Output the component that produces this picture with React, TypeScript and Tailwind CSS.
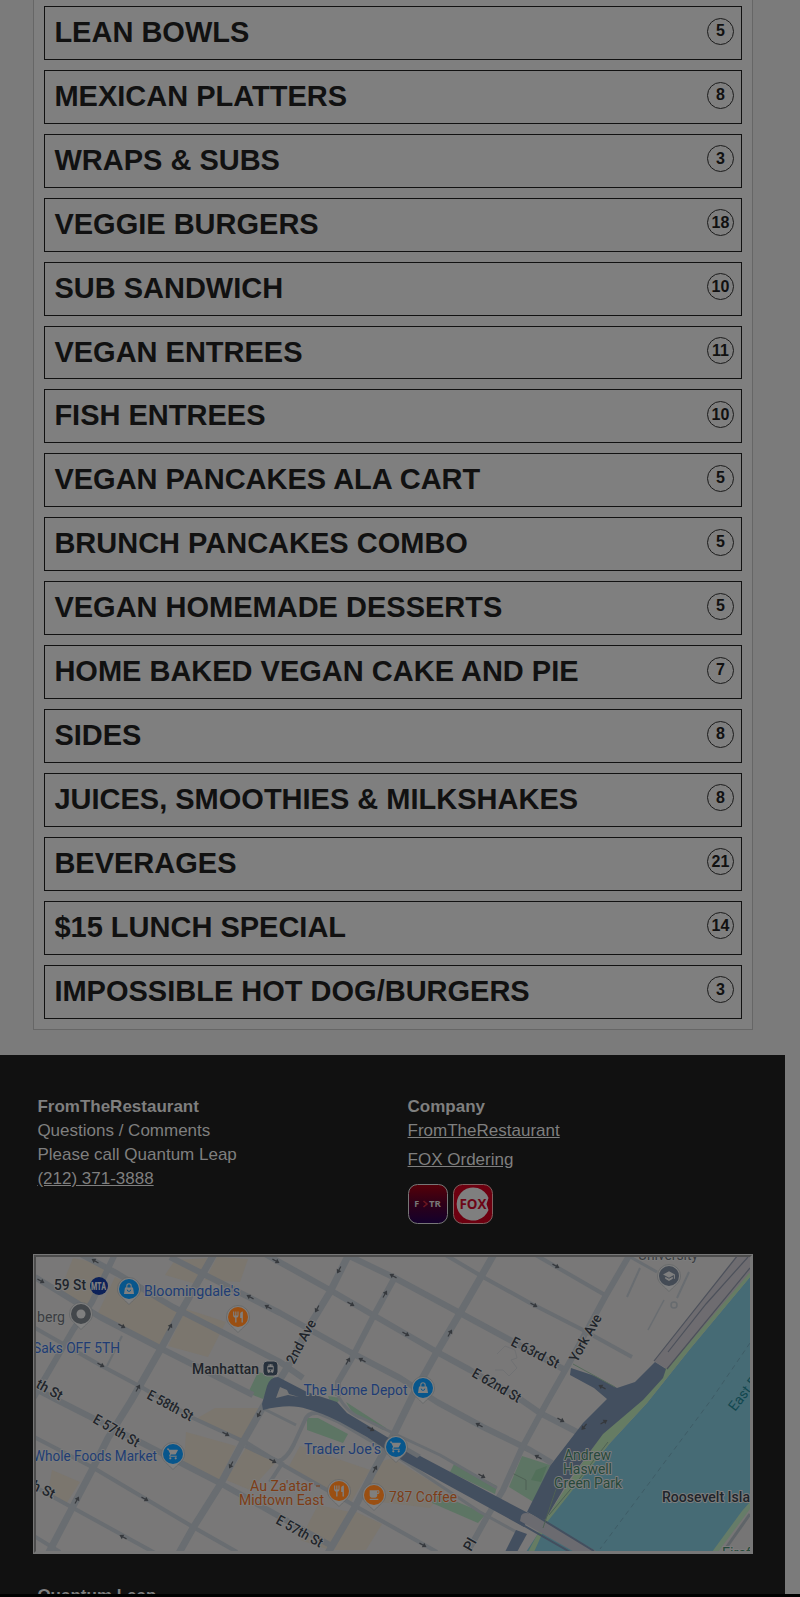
import type { IconType } from "react-icons";
import {
  MdLocalCafe,
  MdRestaurant,
  MdSchool,
  MdShoppingCart,
  MdTram,
} from "react-icons/md";

const categories = [
  { name: "LEAN BOWLS", count: 5 },
  { name: "MEXICAN PLATTERS", count: 8 },
  { name: "WRAPS & SUBS", count: 3 },
  { name: "VEGGIE BURGERS", count: 18 },
  { name: "SUB SANDWICH", count: 10 },
  { name: "VEGAN ENTREES", count: 11 },
  { name: "FISH ENTREES", count: 10 },
  { name: "VEGAN PANCAKES ALA CART", count: 5 },
  { name: "BRUNCH PANCAKES COMBO", count: 5 },
  { name: "VEGAN HOMEMADE DESSERTS", count: 5 },
  { name: "HOME BAKED VEGAN CAKE AND PIE", count: 7 },
  { name: "SIDES", count: 8 },
  { name: "JUICES, SMOOTHIES & MILKSHAKES", count: 8 },
  { name: "BEVERAGES", count: 21 },
  { name: "$15 LUNCH SPECIAL", count: 14 },
  { name: "IMPOSSIBLE HOT DOG/BURGERS", count: 3 },
];

function CategoryRow({ name, count }: { name: string; count: number }) {
  return (
    <li className="flex h-[53.92px] shrink-0 items-start justify-between border border-[#111] pl-[9.4px] pr-[7px]">
      <h2 className="pt-[8px] text-[29px] leading-[34px] font-bold whitespace-nowrap">
        {name}
      </h2>
      <span className="mt-[10.6px] flex size-[27px] items-center justify-center rounded-full border border-[#1c1c1c] text-[16px] leading-none font-bold">
        {count}
      </span>
    </li>
  );
}

const streets = [
  { d: "M170 1257 L280 1313 L350 1352 L400 1378 L437 1402 L483 1427 L530 1450 L552 1463", w: 6 },
  { d: "M77 1252 L118 1274 L173 1307 L280 1362 L303 1378", w: 6 },
  { d: "M35 1277 L100 1317 L160 1348 L253 1395", w: 6 },
  { d: "M35 1328 L100 1365 L143 1388 L193 1418 L247 1443 L283 1465 L357 1507 L437 1552", w: 4 },
  { d: "M30 1386 L57 1400 L140 1442 L220 1483 L330 1545", w: 6 },
  { d: "M34 1437 L92 1467 L193 1527 L237 1552", w: 4 },
  { d: "M30 1484 L55 1498 L155 1553", w: 4 },
  { d: "M34 1536 L60 1552", w: 4 },
  { d: "M265 1254 L330 1290 L373 1315 L437 1352 L470 1370 L520 1399 L540 1413 L577 1432", w: 6 },
  { d: "M345 1254 L393 1277 L460 1313 L510 1340 L567 1371", w: 6 },
  { d: "M444 1254 L483 1277 L530 1303 L583 1330 L632 1357", w: 4 },
  { d: "M534 1254 L605 1295", w: 4 },
  { d: "M625 1254 L657 1272", w: 3 },
  { d: "M30 1404 L45 1378 L73 1330 L92 1302 L115 1254", w: 6 },
  { d: "M214 1254 L183 1308 L163 1345 L131 1401 L108 1438 L92 1470 L70 1512 L48 1554", w: 7 },
  { d: "M349 1254 L330 1292 L310 1325 L287 1368 L263 1407 L243 1442 L220 1485 L193 1528 L179 1553", w: 7 },
  { d: "M395 1277 L373 1317 L352 1358 L338 1382 L338 1396", w: 6 },
  { d: "M347 1425 L318 1413 Q308 1412 305 1420 L294 1444 Q286 1460 278 1461 L266 1456 L245 1446", w: 4 },
  { d: "M283 1462 L270 1482", w: 4 },
  { d: "M262 1408 L296 1425", w: 3 },
  { d: "M494 1254 L482 1275 L460 1313 L437 1352 L413 1395 L395 1432 L373 1472 L355 1507 L328 1553", w: 7 },
  { d: "M630 1254 L605 1297 L567 1367 L547 1402 L522 1448 L503 1490 L487 1517 L468 1551", w: 6 },
  { d: "M122 1336 L107 1366", w: 2 },
  { d: "M640 1268 L627 1297", w: 2 },
  { d: "M689 1272 L677 1298", w: 2 },
  { d: "M664 1300 L648 1330", w: 1.5 },
  { d: "M338 1396 Q348 1414 362 1418 L395 1434 L440 1455 L497 1488", w: 3 },
  { d: "M318 1410 L396 1456 L480 1512 L520 1534", w: 3 },
];

// warm shading of the commercial blocks
const blocks = [
  "M73 1258 L110 1266 L88 1306 L60 1291Z",
  "M115 1277 L181 1309 L160 1346 L97 1315Z",
  "M175 1260 L210 1258 L196 1284 L165 1275Z",
  "M186 1309 L226 1322 L208 1357 L168 1346Z",
  "M217 1257 L248 1259 L240 1282 L205 1280Z",
  "M215 1408 L262 1408 L240 1440 L196 1419Z",
  "M186 1432 L236 1446 L218 1482 L184 1464Z",
  "M247 1446 L276 1462 L250 1490 L226 1480Z",
  "M300 1446 L370 1470 L350 1504 L288 1468Z",
  "M380 1462 L392 1458 L445 1490 L430 1508 L364 1500Z",
  "M352 1510 L382 1524 L366 1550 L334 1550Z",
  "M318 1505 L350 1512 L330 1550 L300 1540Z",
  "M52 1470 L80 1482 L66 1504 L48 1492Z",
];

const parks = [
  "M258 1372 L274 1376 L263 1399 L248 1393Z",
  "M307 1418 L318 1418 L348 1434 L343 1443 L307 1430Z",
  "M454 1464 L497 1486 L495 1494 L450 1472Z",
  "M436 1493 L486 1514 L478 1523 L432 1503Z",
  "M522 1456 L550 1465 L535 1503 L509 1487Z",
  "M346 1402 L386 1428 L383 1430 L352 1412Z",
  "M328 1396 L340 1398 L338 1402 L330 1401Z",
];

const highways = [
  "M262 1404 L267 1386 Q270 1377 278 1377 L307 1392 L337 1402 L347 1413 L387 1437 L422 1457 L530 1514 L524 1527 L400 1459 L367 1437 L340 1422 Q320 1412 307 1409 Q290 1403 263 1410 Z",
  "M655 1362 L666 1369 L663 1378 L643 1400 L603 1434 L569 1480 L545 1520 L527 1512 L550 1466 L583 1423 L607 1399 L594 1388 L570 1375 L571 1368 L595 1376 L617 1388 L635 1382 Z",
  "M516 1530 L527 1534 L517 1552 L505 1552 Z",
];

const arrows = [
  { x: 95, y: 1261, a: 210 },
  { x: 41, y: 1281, a: 28 },
  { x: 122, y: 1326, a: 28 },
  { x: 101, y: 1365, a: 28 },
  { x: 138, y: 1388, a: -60 },
  { x: 170, y: 1327, a: -60 },
  { x: 250, y: 1297, a: 208 },
  { x: 268, y: 1307, a: 208 },
  { x: 276, y: 1261, a: 28 },
  { x: 339, y: 1270, a: 118 },
  { x: 317, y: 1309, a: 118 },
  { x: 351, y: 1304, a: 28 },
  { x: 385, y: 1294, a: -60 },
  { x: 393, y: 1276, a: 208 },
  { x: 406, y: 1334, a: 28 },
  { x: 450, y: 1333, a: -60 },
  { x: 362, y: 1360, a: 208 },
  { x: 348, y: 1361, a: -60 },
  { x: 556, y: 1266, a: 28 },
  { x: 534, y: 1305, a: 28 },
  { x: 226, y: 1434, a: 28 },
  { x: 273, y: 1461, a: 28 },
  { x: 259, y: 1414, a: 118 },
  { x: 231, y: 1465, a: 118 },
  { x: 77, y: 1500, a: -60 },
  { x: 145, y: 1499, a: 28 },
  { x: 123, y: 1537, a: 208 },
  { x: 479, y: 1425, a: 208 },
  { x: 482, y: 1476, a: 28 },
  { x: 371, y: 1429, a: 28 },
  { x: 375, y: 1469, a: -60 },
  { x: 423, y: 1545, a: 28 },
  { x: 561, y: 1420, a: 28 },
  { x: 538, y: 1457, a: 208 },
  { x: 584, y: 1427, a: 130 },
  { x: 604, y: 1422, a: -30 },
  { x: 602, y: 1387, a: 208 },
];

type LabelProps = {
  x: number;
  y: number;
  w: number;
  text: string;
  fill?: string;
  angle?: number;
  size?: number;
  bold?: boolean;
};

function Label({ x, y, w, text, fill = "#20242a", angle = 0, size = 14, bold }: LabelProps) {
  return (
    <text
      x={x}
      y={y}
      textLength={w}
      lengthAdjust="spacingAndGlyphs"
      fontSize={size}
      fontWeight={bold ? 500 : 400}
      fill={fill}
      stroke="#7c7c7c"
      strokeWidth={2}
      strokeLinejoin="round"
      paintOrder="stroke"
      transform={angle ? `rotate(${angle} ${x} ${y})` : undefined}
    >
      {text}
    </text>
  );
}

function Pin({ x, y, fill, icon: Icon }: { x: number; y: number; fill: string; icon?: IconType }) {
  return (
    <g>
      <path
        d={`M${x - 11.5} ${y} a11.5 11.5 0 1 1 23 0 c0 6 -5 9 -8 12 l-3.5 3.5 -3.5 -3.5 c-3 -3 -8 -6 -8 -12z`}
        fill="#7f7f7f"
        stroke="#5d5f62"
        strokeWidth={0.6}
      />
      <circle cx={x} cy={y} r={10} fill={fill} />
      {Icon && <Icon x={x - 6.5} y={y - 6.5} size={13} color="#7f7f7f" />}
    </g>
  );
}

function BagPin({ x, y }: { x: number; y: number }) {
  return (
    <g>
      <Pin x={x} y={y} fill="#07568c" />
      <path d={`M${x - 4} ${y - 1.5} h8 l1 6.5 h-10z`} fill="#7f7f7f" />
      <path
        d={`M${x - 2.2} ${y - 1} v-2 a2.2 2.2 0 0 1 4.4 0 v2`}
        fill="none"
        stroke="#7f7f7f"
        strokeWidth={1.1}
      />
      <path d={`M${x - 1.8} ${y + 0.6} a1.8 1.8 0 0 0 3.6 0`} fill="none" stroke="#07568c" strokeWidth={0.9} />
    </g>
  );
}

function StreetMap() {
  return (
    <svg
      viewBox="36 1257 714 294"
      className="block h-[294px] w-[714px] bg-[#797878]"
      fontFamily="Roboto, sans-serif"
    >
      {blocks.map((d) => (
        <path key={d} d={d} fill="#7b766e" />
      ))}
      {parks.map((d) => (
        <path key={d} d={d} fill="#5d7564" />
      ))}
      <path d="M536 1470 L547 1466 L541 1482 L531 1480Z" fill="#52705a" />
      <path d="M512 1473 L526 1480 L526 1490" stroke="#4f6154" fill="none" />
      <path d="M750 1277 L690 1349 L647 1403 L610 1443 L547 1520 L526 1552 L714 1552 L750 1503Z" fill="#466b75" />
      <path d="M750 1265 L690 1338 L640 1398 L603 1433 L572 1478 L545 1520 L528 1552 L534 1552 L548 1521 L610 1443 L647 1403 L690 1349 L750 1277Z" fill="#667c63" />
      <path d="M750 1502 L742 1511 L712 1552 L722 1552 L750 1513Z" fill="#667c68" />
      <path d="M750 1509 L718 1552 L750 1552Z" fill="#767575" />
      <path d="M750 1514 L726 1548" stroke="#5f6468" strokeWidth={3} />
      <path d="M750 1343 L711 1400 L600 1549" stroke="#3e5c66" strokeWidth={1} strokeDasharray="5 4" fill="none" />

      <g fill="none" stroke="#696d71" strokeLinejoin="round">
        {streets.map((s) => (
          <path key={s.d} d={s.d} strokeWidth={s.w} />
        ))}
      </g>
      <circle cx={674} cy={1305} r={3} fill="none" stroke="#676b6f" strokeWidth={1.5} />
      <path d="M497 1354 l8 -8 10 4 2 8 -6 2 6 8 -8 8 -6 -6 -8 0" stroke="#707173" fill="none" />

      <path d="M737 1255 L752 1255 L752 1270 L667 1369 L654 1361Z" fill="#6e6c70" />
      <path d="M738 1255 L654 1361 M748 1257 L706 1304 L668 1352 M750 1268 L667 1369" stroke="#4d515b" strokeWidth={1.2} fill="none" />
      {highways.map((d) => (
        <path key={d} d={d} fill="#434f5f" />
      ))}
      <path d="M276 1398 L280 1387 L287 1390 L289 1394 L299 1397 L288 1395Z" fill="#767676" />
      <path d="M407 1447 L421 1455 L417 1458 L405 1451Z" fill="#686c70" />
      <path d="M521 1516 Q523 1511 531 1514 L596 1551 L578 1554 L520 1521Z" fill="#6b6b70" />
      <path d="M530 1512 L594 1551 M516 1521 L570 1552" stroke="#434f5f" strokeWidth={2} />
      <path d="M608 1442 L580 1478 L549 1515 M556 1489 L543 1528" stroke="#4f6154" strokeWidth={1} fill="none" />
      <path d="M573 1364 L615 1387" stroke="#566a5b" strokeWidth={1} />

      {arrows.map((a) => (
        <path
          key={`${a.x}-${a.y}`}
          d="M-4 -.6 H0 V-2.6 L4 0 L0 2.6 V.6 H-4Z"
          fill="#36393d"
          transform={`translate(${a.x} ${a.y}) rotate(${a.a})`}
        />
      ))}

      <Label x={54} y={1290} w={32} text="59 St" bold />
      <circle cx={99} cy={1286} r={9} fill="#0c2159" />
      <text x={91} y={1290} fontSize={11} fontWeight={900} textLength={15} lengthAdjust="spacingAndGlyphs" fill="#7f7f7f">
        MTA
      </text>
      <BagPin x={129} y={1289} />
      <Label x={144} y={1296} w={96} text="Bloomingdale's" fill="#203c74" />
      <Pin x={81} y={1314} fill="#43474b" />
      <circle cx={81} cy={1314} r={4.5} fill="#7f7f7f" />
      <Label x={37} y={1322} w={28} text="berg" fill="#3a3d41" />
      <Label x={33} y={1353} w={87} text="Saks OFF 5TH" fill="#203c74" />
      <Pin x={238} y={1317} fill="#9a4f12" icon={MdRestaurant} />
      <Label x={192} y={1374} w={67} text="Manhattan" bold />
      <rect x={263} y={1361} width={15} height={15} rx={4} fill="#27313c" stroke="#7f7f7f" />
      <MdTram x={265} y={1363} size={11} color="#7f7f7f" />
      <Label x={294} y={1365} w={48} text="2nd Ave" angle={-62} bold />
      <Label x={303.5} y={1395} w={104} text="The Home Depot" fill="#203c74" />
      <BagPin x={423} y={1388} />
      <Label x={510} y={1345} w={52} text="E 63rd St" angle={27} bold />
      <Label x={471} y={1376} w={54} text="E 62nd St" angle={30} bold />
      <Label x={577} y={1363} w={52} text="York Ave" angle={-61} bold />
      <Pin x={669} y={1276} fill="#444b55" icon={MdSchool} />
      <Label x={638} y={1260} w={60} text="University" fill="#3a3d41" />

      <Label x={35} y={1387} w={28} text="th St" angle={29} bold />
      <Label x={146} y={1398} w={50} text="E 58th St" angle={28} bold />
      <Label x={92} y={1422} w={51} text="E 57th St" angle={30} bold />
      <Label x={27} y={1487} w={28} text="th St" angle={25} bold />
      <Label x={33} y={1461} w={124} text="Whole Foods Market" fill="#203c74" />
      <Pin x={173} y={1454} fill="#07568c" icon={MdShoppingCart} />
      <Label x={304} y={1454} w={77} text="Trader Joe's" fill="#203c74" />
      <Pin x={396} y={1447} fill="#07568c" icon={MdShoppingCart} />
      <Label x={250} y={1491} w={63} text="Au Za'atar" fill="#7d3d16" />
      <path d="M316 1486 h4" stroke="#7d3d16" />
      <Label x={239} y={1505} w={85} text="Midtown East" fill="#7d3d16" />
      <Pin x={339} y={1491} fill="#9a4f12" icon={MdRestaurant} />
      <Pin x={374} y={1495} fill="#9a4f12" icon={MdLocalCafe} />
      <Label x={389} y={1502} w={68} text="787 Coffee" fill="#7d3d16" />
      <Label x={275} y={1523} w={51} text="E 57th St" angle={29} bold />
      <Label x={471} y={1552} w={12} text="Pl" angle={-60} bold />
      <Label x={564} y={1460} w={47} text="Andrew" fill="#27493a" />
      <Label x={563} y={1474} w={49} text="Haswell" fill="#27493a" />
      <Label x={554} y={1488} w={68} text="Green Park" fill="#27493a" />
      <Label x={662} y={1502} w={88} text="Roosevelt Isla" bold />
      <text x={735} y={1412} fontSize={14} fill="#12474f" transform="rotate(-52 735 1412)">
        East River
      </text>
      <Label x={722} y={1558} w={29} text="Firef" fill="#27493a" />
    </svg>
  );
}

function FtrLogo() {
  return (
    <svg viewBox="0 0 40 40" className="size-10">
      <defs>
        <linearGradient id="ftr" x1="0" y1="0" x2="0" y2="1">
          <stop offset="0" stopColor="#560008" />
          <stop offset="0.5" stopColor="#2d0018" />
          <stop offset="1" stopColor="#13002c" />
        </linearGradient>
      </defs>
      <rect x=".5" y=".5" width="39" height="39" rx="9" fill="url(#ftr)" stroke="#777" />
      <g fontFamily="Open Sans, sans-serif" fontWeight="700" fontSize="9" fill="#777">
        <text x="6.3" y="23.2">F</text>
        <text x="21" y="23.2" textLength="12" lengthAdjust="spacingAndGlyphs">TR</text>
      </g>
      <path d="M15.5 17 l3.5 3 -3.5 3" fill="none" stroke="#6b1520" strokeWidth="1.6" />
    </svg>
  );
}

function FoxLogo() {
  return (
    <svg viewBox="0 0 40 40" className="size-10">
      <rect x=".5" y=".5" width="39" height="39" rx="9" fill="#6d0010" stroke="#80605f" />
      <path d="M35.5 14 A16.5 16.5 0 1 0 35.5 26 L33.5 20Z" fill="#7f7f7f" />
      <text
        x="6.5"
        y="25"
        textLength="27"
        lengthAdjust="spacingAndGlyphs"
        fontFamily="Open Sans, sans-serif"
        fontWeight="700"
        fontSize="14"
        fill="#6d0616"
      >
        FOX
      </text>
    </svg>
  );
}

export default function App() {
  return (
    <div className="flex h-[1597px] w-[800px] flex-col overflow-hidden bg-black font-['Liberation_Sans',Arial,sans-serif] text-[#111]">
      <div className="h-[1594px] shrink-0 overflow-hidden bg-[#7b7b7b]">
        <main className="h-[1055px] pl-[33px]">
          <ul className="flex h-[1030px] w-[720px] flex-col gap-[10px] border-x border-b border-[#666] bg-[#7f7f7f] px-[10px] pt-[6px]">
            {categories.map((c) => (
              <CategoryRow key={c.name} name={c.name} count={c.count} />
            ))}
          </ul>
        </main>

        <footer className="h-[539px] w-[785px] overflow-hidden bg-[#111] text-[17px] leading-6 text-[#7f7f7f]">
          <div className="flex h-[199px] pt-[40px] pl-[37.4px]">
            <div className="w-[370.2px]">
              <h3 className="font-bold">FromTheRestaurant</h3>
              <p>Questions / Comments</p>
              <p>Please call Quantum Leap</p>
              <a href="tel:2123713888" className="underline">
                (212) 371-3888
              </a>
            </div>
            <div className="flex flex-col items-start">
              <h3 className="font-bold">Company</h3>
              <a href="#" className="underline">
                FromTheRestaurant
              </a>
              <a href="#" className="mt-[5px] underline">
                FOX Ordering
              </a>
              <div className="mt-[12px] flex gap-[5px]">
                <FtrLogo />
                <FoxLogo />
              </div>
            </div>
          </div>
          <div className="ml-[33px] h-[300px] w-[720px] border border-[#777]">
            <div className="h-[298px] w-[718px] border-2 border-t-[#4d4d4d] border-r-[#777] border-b-[#777] border-l-[#4d4d4d]">
              <StreetMap />
            </div>
          </div>
          <h3 className="mt-[30px] pl-[37.4px] font-bold">Quantum Leap</h3>
        </footer>
      </div>
    </div>
  );
}
